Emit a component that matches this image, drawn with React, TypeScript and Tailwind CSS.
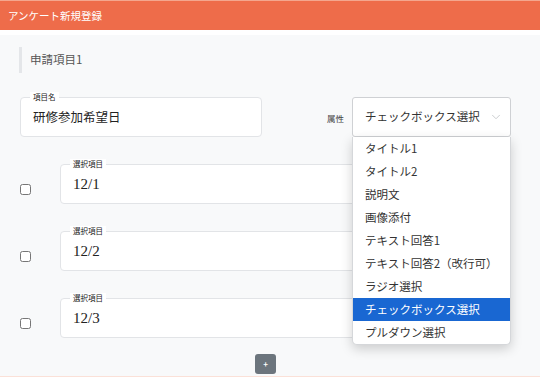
import { ChevronDown } from "lucide-react";

const sans = { fontFamily: '"Noto Sans CJK JP", "Noto Sans", sans-serif' };
const serif = { fontFamily: '"Liberation Serif", "Noto Sans CJK JP", serif' };

const options = [
  "タイトル1",
  "タイトル2",
  "説明文",
  "画像添付",
  "テキスト回答1",
  "テキスト回答2（改行可）",
  "ラジオ選択",
  "チェックボックス選択",
  "プルダウン選択",
];
const selected = "チェックボックス選択";
const choices = ["12/1", "12/2", "12/3"];

// outlined text box with a small label sitting on the top border
const Field = ({ label, value, className }: { label: string; value: string; className?: string }) => (
  <div className={`relative h-[40px] rounded-[4px] border border-[#e2e4e7] bg-white ${className ?? ""}`}>
    <span className="absolute -top-[6px] left-[9px] bg-white px-[3px] text-[7.5px] leading-[10px] text-[#222]" style={sans}>
      {label}
    </span>
    <div className="flex h-full items-center pl-[12px] pt-[1px] text-[15px] text-[#222]" style={serif}>
      {value}
    </div>
  </div>
);

const App = () => {
  return (
    <div className="flex h-[377px] flex-col overflow-hidden bg-white" style={sans}>
      <div className="flex h-[30px] shrink-0 items-center border-t border-[#f4a68e] bg-[#ee6c4a] pl-[8px] text-[10.5px] text-white">
        アンケート新規登録
      </div>
      <div className="h-[5px] shrink-0 bg-white" />

      <div className="flex flex-1 flex-col border-b border-[#fbe1d8] bg-[#f8f9fa] pl-[20px] pr-[29px] pt-[12px]">
        <div className="-ml-[1px] flex h-[26px] items-center border-l-[3px] border-[#e4e6e9] pl-[8px] text-[11.5px] text-[#555]">
          申請項目1
        </div>

        <div className="mt-[24px] flex items-center">
          <div className="w-[242px]">
            <div className="relative h-[40px] rounded-[4px] border border-[#e2e4e7] bg-white">
              <span className="absolute -top-[6px] left-[9px] bg-white px-[3px] text-[7.5px] leading-[10px] text-[#222]">
                項目名
              </span>
              <div className="flex h-full items-center pl-[12px] pt-[1px] text-[12.5px] text-[#222]">研修参加希望日</div>
            </div>
          </div>
          <div className="ml-auto flex items-center">
            <span className="mr-[8px] pt-[2px] text-[8.5px] text-[#444]">属性</span>
            <div className="relative w-[159px]">
              <div className="flex h-[40px] items-center rounded-[3px] border border-[#cfd1d4] bg-white pl-[12px] pr-[7px] text-[11.5px] text-[#333]">
                <span className="flex-1">{selected}</span>
                <ChevronDown className="h-[14px] w-[14px] text-[#c4c6c9]" strokeWidth={1.5} />
              </div>
              <div className="absolute left-0 top-full z-10 w-full overflow-hidden rounded-b-[5px] border border-t-0 border-[#d5d7da] bg-white shadow-[0_4px_12px_rgba(0,0,0,0.18)]">
                {options.map((o) => (
                  <div
                    key={o}
                    className={`flex h-[23px] items-center pl-[12px] text-[11.5px] ${
                      o === selected ? "bg-[#1967d2] text-white" : "text-[#333]"
                    }`}
                  >
                    {o}
                  </div>
                ))}
              </div>
            </div>
          </div>
        </div>

        <div className="mt-[27px] flex flex-col gap-[27px]">
          {choices.map((c) => (
            <div key={c} className="flex items-start">
              <div className="mt-[20px] h-[11px] w-[11px] shrink-0 rounded-[2.5px] border border-[#767676] bg-white" />
              <Field label="選択項目" value={c} className="ml-[29px] flex-1" />
            </div>
          ))}
        </div>

        <div className="mt-[16px] flex justify-center">
          <button className="flex h-[20px] w-[21px] items-center justify-center rounded-[3px] bg-[#6c757d] text-[8px] font-bold leading-none text-white">
            +
          </button>
        </div>
      </div>
    </div>
  );
};

export default App;
